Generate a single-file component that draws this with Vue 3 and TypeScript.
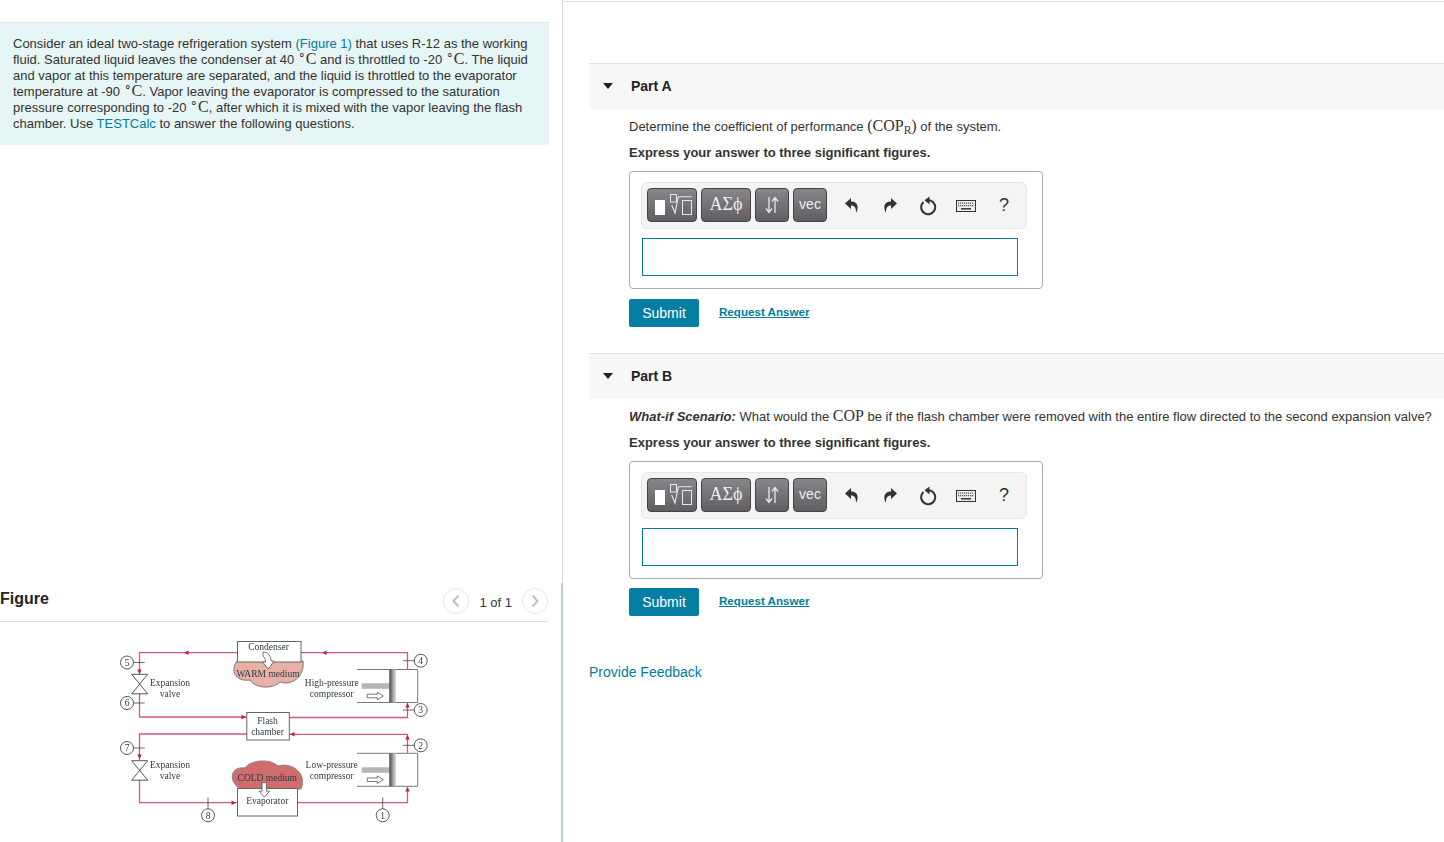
<script setup lang="ts">
type Part = { id: string; title: string };

const parts: Part[] = [
  { id: "a", title: "Part A" },
  { id: "b", title: "Part B" },
];

const tools = [
  { key: "undo", d: "M6 0 0 5.500 6 11V7.500c3.600 0 5.200 2 5 7.500 2.600-4 3-11.500-5-11.500Z", flip: false },
  { key: "redo", d: "M6 0 0 5.500 6 11V7.500c3.600 0 5.200 2 5 7.500 2.600-4 3-11.500-5-11.500Z", flip: true },
];

const circles = [
  { n: "5", x: 27, y: 32.5, x2: 44.7, y2: 32.5 },
  { n: "6", x: 27, y: 73, x2: 44.7, y2: 73 },
  { n: "7", x: 27, y: 118, x2: 44.7, y2: 118 },
  { n: "4", x: 320.7, y: 30.7, x2: 303, y2: 30.7 },
  { n: "3", x: 320.7, y: 80, x2: 303, y2: 80 },
  { n: "2", x: 320.7, y: 115.3, x2: 303, y2: 115.3 },
  { n: "8", x: 108, y: 185.3, x2: 108, y2: 167.3 },
  { n: "1", x: 282.7, y: 185.3, x2: 282.7, y2: 167.5 },
];

const pipes = [
  "M137 22.700H39.500V44",
  "M201 22.700H307.500V39.500",
  "M39.500 64V87H147",
  "M189 87.500H307.500V73",
  "M147 104H39.500V130",
  "M189 104.300H307.500V123",
  "M39.500 150V172.700H137",
  "M197 172.700H307.500V157",
];

// [x, y, direction] of the small pipe arrowheads
const heads: [number, number, number][] = [
  [86, 22.7, 180],
  [224, 22.7, 180],
  [39.5, 42, 90],
  [144, 87, 0],
  [39.5, 127, 90],
  [192, 104.3, 180],
  [134, 172.7, 0],
  [307.5, 75, -90],
  [307.5, 107, -90],
  [307.5, 159, -90],
];

const labels = [
  { t: "Condenser", x: 168.500, y: 20 },
  { t: "WARM medium", x: 168, y: 46.500 },
  { t: "Expansion", x: 70, y: 55.500 },
  { t: "valve", x: 70, y: 66.500 },
  { t: "High-pressure", x: 231.700, y: 55.500 },
  { t: "compressor", x: 231.700, y: 66.500 },
  { t: "Flash", x: 167.500, y: 93.500 },
  { t: "chamber", x: 167.500, y: 104.500 },
  { t: "Expansion", x: 70, y: 137.500 },
  { t: "valve", x: 70, y: 148.500 },
  { t: "Low-pressure", x: 231.700, y: 137.500 },
  { t: "compressor", x: 231.700, y: 148.500 },
  { t: "COLD medium", x: 167.300, y: 150.700 },
  { t: "Evaporator", x: 167.300, y: 174 },
];

const pistons = [
  { top: 39.5, rod: 53.3, arrow: 66 },
  { top: 123.3, rod: 137.3, arrow: 149.7 },
];
const valves = [44.3, 130.7];
</script>

<template>
  <div class="page">
    <div class="left">
      <div class="left-top">
        <div class="intro">
          Consider an ideal two-stage refrigeration system <a class="lnk">(Figure 1)</a> that uses R-12 as the working
          fluid. Saturated liquid leaves the condenser at 40 <span class="m"><sup>∘</sup>C</span> and is throttled to -20 <span class="m"><sup>∘</sup>C</span>. The liquid
          and vapor at this temperature are separated, and the liquid is throttled to the evaporator
          temperature at -90 <span class="m"><sup>∘</sup>C</span>. Vapor leaving the evaporator is compressed to the saturation
          pressure corresponding to -20 <span class="m"><sup>∘</sup>C</span>, after which it is mixed with the vapor leaving the flash
          chamber. Use <a class="lnk">TESTCalc</a> to answer the following questions.
        </div>
      </div>
      <div class="left-fig">
        <div class="fig-head">
          <strong>Figure</strong>
          <div class="pager">
            <span class="pg">
              <svg width="10" height="14" viewBox="0 0 10 14"><path d="M7.500 1.500 2.500 7l5 5.500" fill="none" stroke="#b9c0c8" stroke-width="2" /></svg>
            </span>
            <span class="pg-text">1 of 1</span>
            <span class="pg">
              <svg width="10" height="14" viewBox="0 0 10 14"><path d="M2.500 1.500 7.500 7l-5 5.500" fill="none" stroke="#b9c0c8" stroke-width="2" /></svg>
            </span>
          </div>
        </div>
        <svg class="diagram" width="340" height="200" viewBox="0 0 340 200">
          <defs>
            <linearGradient id="head" x1="0" x2="1" y1="0" y2="0">
              <stop offset="0" stop-color="#444" />
              <stop offset="0.6" stop-color="#aaa" />
              <stop offset="1" stop-color="#ddd" />
            </linearGradient>
          </defs>
          <path v-for="d in pipes" :key="d" :d="d" fill="none" stroke="#cf5a80" stroke-width="1.300" />
          <path
            v-for="(h, i) in heads"
            :key="i"
            d="M-2.500-2.200 2 0-2.500 2.200Z"
            fill="#b81e4e"
            :transform="`translate(${h[0]} ${h[1]}) rotate(${h[2]})`"
          />

          <path d="M137 31c-7 9-2 21 13 19 5 8 22 10 30 2 10 4 25-4 23-21Z" fill="#e9b0a8" stroke="#777" />
          <rect x="137.500" y="11.500" width="63.500" height="20.500" fill="#fff" stroke="#666" />
          <path d="M163 22c5 0 8 4 8 9l3 0-5.500 8-6-7 3 0c0-3-1-5-2.500-6Z" fill="#fff" stroke="#555" stroke-width="0.800" />

          <path d="M140 159c-12-8-10-23 5-21 5-8 25-10 33-2 12-4 30 6 23 23Z" fill="#cf6c6c" stroke="#888" />
          <rect x="137.500" y="158.500" width="60" height="27.500" fill="#fff" stroke="#666" />
          <path d="M162 152.700h4.500v8.500h3l-5.200 6-5.300-6h3Z" fill="#fff" stroke="#555" stroke-width="0.800" />

          <rect x="146.800" y="82.500" width="42.500" height="27.500" fill="#fff" stroke="#666" />

          <g v-for="y in valves" :key="y" fill="none" stroke="#444" stroke-width="0.900">
            <path :d="`M31.700 ${y}H47.700L31.700 ${y + 19.500}H47.700Z`" />
          </g>

          <g v-for="p in pistons" :key="p.top">
            <path :d="`M257 ${p.top}H317.700V${p.top + 33}H257`" fill="#fff" stroke="#777" />
            <rect x="261.700" :y="p.rod" width="28" height="5.500" fill="#b5b5b5" />
            <rect x="289.300" :y="p.top" width="6.800" height="33" fill="url(#head)" />
            <path
              :d="`M267.300 ${p.arrow - 1.800}h10v-2l6 3.800-6 3.800v-2h-10Z`"
              fill="#fff"
              stroke="#444"
              stroke-width="0.700"
            />
          </g>

          <g v-for="c in circles" :key="c.n">
            <line :x1="c.x" :y1="c.y" :x2="c.x2" :y2="c.y2" stroke="#444" stroke-width="0.800" />
            <circle :cx="c.x" :cy="c.y" r="6.500" fill="#fff" stroke="#444" stroke-width="0.900" />
            <text :x="c.x" :y="c.y + 3.200" class="dg">{{ c.n }}</text>
          </g>

          <text v-for="l in labels" :key="l.t + l.y" :x="l.x" :y="l.y" class="dg">{{ l.t }}</text>
        </svg>
      </div>
    </div>

    <div class="right">
      <section v-for="p in parts" :key="p.id" class="part">
        <header class="part-head">
          <i class="tri"></i>
          <span>{{ p.title }}</span>
        </header>
        <p v-if="p.id === 'a'" class="q">
          Determine the coefficient of performance <span class="m">(COP<sub>R</sub>)</span> of the system.
        </p>
        <p v-else class="q">
          <b><em>What-if Scenario:</em></b> What would the <span class="m">COP</span> be if the flash chamber were removed with the entire flow directed to the second expansion valve?
        </p>
        <p class="q hint">Express your answer to three significant figures.</p>

        <div class="answer">
          <div class="toolbar">
            <button class="tb w50">
              <svg width="42" height="28" viewBox="0 0 42 28">
                <rect x="4" y="9" width="10" height="15" fill="#fff" />
                <rect x="19.500" y="3.500" width="6" height="7.500" fill="none" stroke="#e8e8e8" />
                <path d="M20.700 14 24 22 27.300 5.700H40.700" fill="none" stroke="#e8e8e8" stroke-width="1.100" />
                <rect x="31.500" y="9.500" width="9" height="14" fill="none" stroke="#e8e8e8" />
              </svg>
            </button>
            <button class="tb w50 greek">ΑΣϕ</button>
            <button class="tb w34">
              <svg width="16" height="18" viewBox="0 0 16 18">
                <path d="M5 1v15M2 12.500 5 16.500 8 12.500M11 17V2M8 5.500 11 1.500 14 5.500" fill="none" stroke="#e8e8e8" stroke-width="1.300" />
              </svg>
            </button>
            <button class="tb w34 vec">vec</button>
            <div class="tools">
              <span v-for="t in tools" :key="t.key" class="tool">
                <svg width="14" height="15" viewBox="0 0 14 15" :class="{ flip: t.flip }"><path :d="t.d" fill="#333" /></svg>
              </span>
              <span class="tool">
                <svg width="18" height="20" viewBox="0 0 18 20">
                  <path d="M4.500 6A7 7 0 1 0 9 4.200" fill="none" stroke="#333" stroke-width="2" />
                  <path d="M10.500 0.500V8.500L5.500 4.200Z" fill="#333" />
                </svg>
              </span>
              <span class="tool">
                <svg width="20" height="12" viewBox="0 0 20 12">
                  <rect x="0.500" y="0.500" width="19" height="11" fill="#eee" stroke="#333" />
                  <path d="M2 3.200h16M2 5.700h16" stroke="#555" stroke-width="1.300" stroke-dasharray="1.200 0.800" />
                  <path d="M5 8.800h10" stroke="#333" stroke-width="1.500" />
                </svg>
              </span>
              <span class="tool help">?</span>
            </div>
          </div>
          <div class="field"></div>
        </div>

        <div class="actions">
          <button class="submit">Submit</button>
          <a class="request">Request Answer</a>
        </div>
      </section>
      <a class="feedback">Provide Feedback</a>
    </div>
  </div>
</template>

<style>
html,
body {
  margin: 0;
  background: #fff;
}
</style>

<style scoped>
.page {
  display: flex;
  width: 1444px;
  height: 842px;
  overflow: hidden;
  font-family: "Liberation Sans", Arial, sans-serif;
  font-size: 13px;
  color: #333;
  background: #fff;
}
.left {
  width: 563px;
  flex: none;
  display: flex;
  flex-direction: column;
}
.left-top {
  height: 583px;
  box-sizing: border-box;
  padding-top: 22px;
  border-right: 1px solid #dcdcdc;
  padding-right: 13px;
}
.intro {
  box-sizing: border-box;
  height: 123px;
  padding: 13px 8px 0 13px;
  line-height: 16px;
  background: #e6f5f5;
  border-top: 1px solid #e2e8e8;
}
.lnk {
  color: #007da0;
}
.m {
  font-family: "Liberation Serif", "Times New Roman", serif;
  font-size: 16px;
  line-height: 0;
}
.m sup {
  font-size: 12px;
  line-height: 0;
  vertical-align: 5px;
}
.m sub {
  font-size: 11.500px;
  line-height: 0;
  vertical-align: -3px;
}
.left-fig {
  flex: 1;
  border-right: 2px solid #bccbdd;
  padding-right: 13px;
}
.fig-head {
  height: 38px;
  display: flex;
  align-items: center;
  justify-content: space-between;
  border-bottom: 1px solid #e0e0e0;
  font-size: 16px;
  color: #222;
}
.fig-head strong {
  margin-top: -6px;
}
.pager {
  display: flex;
  align-items: center;
  gap: 10px;
  margin-top: -3px;
  font-size: 13px;
  color: #273a4e;
}
.pg {
  width: 24px;
  height: 24px;
  border: 1px solid #e6e6e6;
  border-radius: 50%;
  display: flex;
  align-items: center;
  justify-content: center;
}
.pg-text {
  margin-top: 4px;
}
.diagram {
  display: block;
  margin: 8px 0 0 100px;
  filter: blur(0.3px);
}
.dg {
  font-family: "Liberation Serif", "Times New Roman", serif;
  font-size: 9.500px;
  text-anchor: middle;
  fill: #2f3a45;
}
.right {
  flex: 1;
  min-width: 0;
  box-sizing: border-box;
  border-top: 1px solid #e0e0e0;
  margin-top: 1px;
  padding: 61px 0 0 26px;
}
.part-head {
  box-sizing: border-box;
  height: 46px;
  display: flex;
  align-items: center;
  padding: 0 0 2px 14px;
  background: #f7f7f7;
  border-top: 1px solid #e2e2e2;
  font-size: 14px;
  font-weight: 700;
  color: #222;
}
.part-head span {
  margin-left: 18px;
}
.tri {
  width: 0;
  height: 0;
  border-left: 5.500px solid transparent;
  border-right: 5.500px solid transparent;
  border-top: 6px solid #222;
}
.q {
  margin: 8px 0 0 40px;
  line-height: 20px;
  white-space: nowrap;
}
.hint {
  margin-top: 6px;
  font-weight: 700;
}
.answer {
  box-sizing: border-box;
  width: 414px;
  height: 118px;
  margin: 8px 0 0 40px;
  padding: 10px 15px 0 11px;
  border: 1px solid #aaa;
  border-radius: 4px;
}
.toolbar {
  box-sizing: border-box;
  width: 386px;
  height: 47px;
  display: flex;
  align-items: center;
  gap: 4px;
  padding: 0 5px;
  background: #f4f4f4;
  border: 1px solid #e6e6e6;
  border-radius: 6px;
}
.tb {
  flex: none;
  box-sizing: border-box;
  height: 34px;
  margin-top: -1px;
  padding: 0;
  display: flex;
  align-items: center;
  justify-content: center;
  color: #eee;
  background: linear-gradient(#87878b, #5f5f63);
  border: 1px solid #444;
  border-radius: 4px;
}
.w50 {
  width: 50px;
}
.w34 {
  width: 34px;
}
.greek {
  font-family: "Liberation Serif", "Times New Roman", serif;
  font-size: 18px;
  padding-bottom: 1px;
}
.vec {
  font-family: "Liberation Sans", Arial, sans-serif;
  font-size: 14px;
  padding-bottom: 2px;
}
.tools {
  flex: none;
  display: flex;
  align-items: center;
  margin-left: 2px;
}
.tool {
  width: 38px;
  height: 24px;
  display: flex;
  align-items: center;
  justify-content: center;
}
.flip {
  transform: scaleX(-1);
}
.help {
  font-size: 18px;
  color: #333;
}
.field {
  box-sizing: border-box;
  width: 376px;
  height: 38px;
  margin: 9px 0 0 1px;
  border: 1px solid #007da0;
}
.actions {
  display: flex;
  align-items: center;
  margin: 10px 0 26px 40px;
}
.part + .part .actions {
  margin-top: 9px;
}
.submit {
  box-sizing: border-box;
  width: 70px;
  height: 28px;
  padding: 0;
  font: 14px "Liberation Sans", Arial, sans-serif;
  color: #fff;
  background: #047ea3;
  border: 0;
  border-radius: 2px;
}
.request {
  margin: -3px 0 0 20px;
  font-size: 11.600px;
  font-weight: 700;
  color: #007da0;
  text-decoration: underline;
}
.feedback {
  display: block;
  margin-top: 46px;
  font-size: 14px;
  line-height: 20px;
  color: #007da0;
}
</style>
